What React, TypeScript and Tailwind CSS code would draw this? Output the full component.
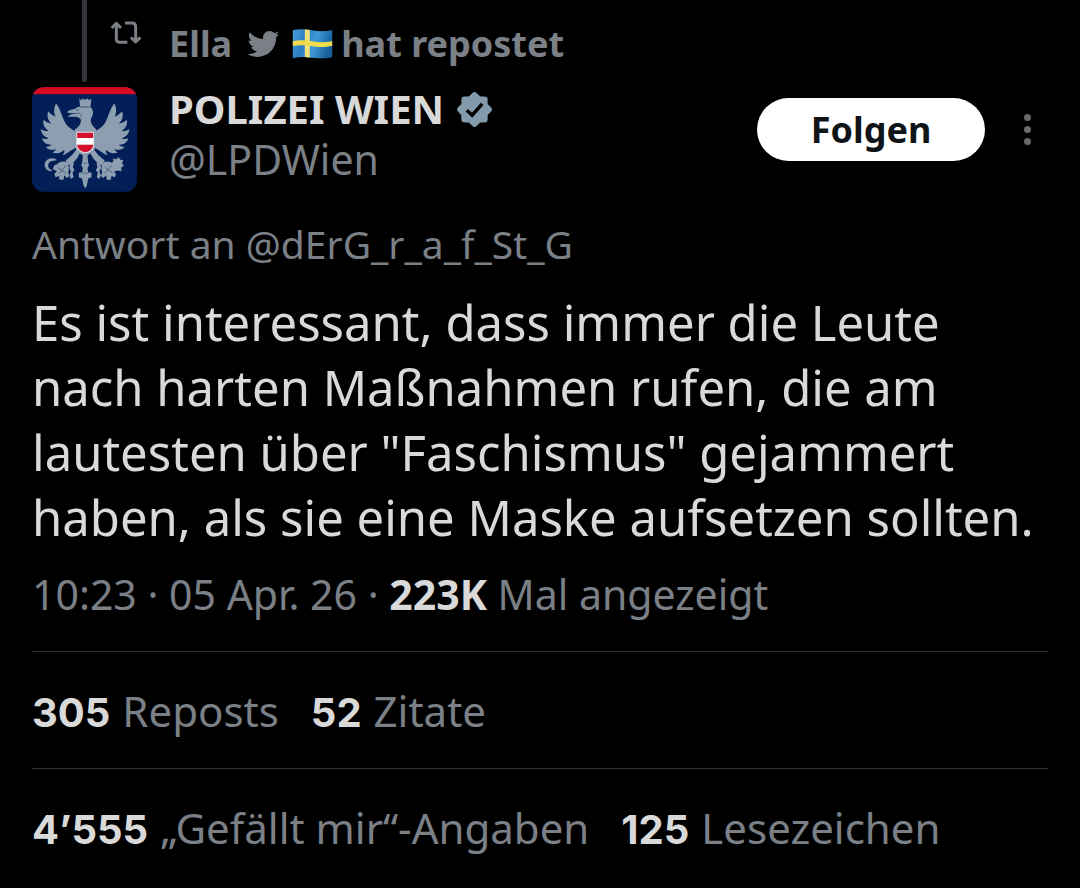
import { ReactNode } from "react";

const RepostIcon = () => (
    <svg viewBox="120 58 96 75" className="h-[25px] w-8" fill="none" stroke="currentColor" strokeWidth="9" aria-hidden="true">
        <path d="M139 69V114Q139 125 150 125H172" />
        <path d="M125 82L139 68L153 82" strokeLinejoin="round" />
        <path d="M165 67H186Q197 67 197 78V122" />
        <path d="M183 110L197 124L211 110" strokeLinejoin="round" />
    </svg>
);

const BirdIcon = () => (
    <svg viewBox="0 2 24 20" className="h-7 w-[34px]" fill="currentColor" role="img" aria-label="Twitter">
        <path d="M23.643 4.937c-.835.37-1.732.62-2.675.733.962-.576 1.7-1.49 2.048-2.578-.9.534-1.897.922-2.958 1.13-.85-.904-2.06-1.47-3.4-1.47-2.572 0-4.658 2.086-4.658 4.66 0 .364.042.718.12 1.06-3.873-.195-7.304-2.05-9.602-4.868-.4.69-.63 1.49-.63 2.342 0 1.616.823 3.043 2.072 3.878-.764-.025-1.482-.234-2.11-.583v.06c0 2.257 1.605 4.14 3.737 4.568-.392.106-.803.162-1.227.162-.3 0-.593-.028-.877-.082.593 1.85 2.313 3.198 4.352 3.234-1.595 1.25-3.604 1.995-5.786 1.995-.376 0-.747-.022-1.112-.065 2.062 1.323 4.51 2.093 7.14 2.093 8.57 0 13.255-7.098 13.255-13.254 0-.2-.005-.402-.014-.602.91-.658 1.7-1.477 2.323-2.41z" />
    </svg>
);

const SwedenFlag = () => (
    <svg viewBox="0 0 122 90" className="h-[30px] w-[41px]" role="img" aria-label="Schweden">
        <defs>
            <linearGradient id="flagBlue" x1="0" x2="1" y1="0" y2="0.25">
                <stop offset="0" stopColor="#4a9fdc" />
                <stop offset="0.35" stopColor="#2a80c0" />
                <stop offset="0.65" stopColor="#3f97d6" />
                <stop offset="1" stopColor="#17609c" />
            </linearGradient>
            <clipPath id="flagShape">
                <path d="M1 6Q1 4 4 3C22 -1 40 1 60 4C80 8 100 8 118 4Q121 3 121 6V82Q121 84 118 85C98 90 80 89 60 86C40 83 22 83 4 87Q1 88 1 85Z" />
            </clipPath>
        </defs>
        <g clipPath="url(#flagShape)">
            <rect width="122" height="90" fill="url(#flagBlue)" />
            <path d="M38 0H53V90H38Z" fill="#f3e07a" />
            <path d="M0 37C22 32 40 34 60 37C80 41 100 41 122 36V50C100 55 80 55 60 52C40 48 22 47 0 52Z" fill="#f3dc4c" />
        </g>
    </svg>
);

const VerifiedBadge = () => (
    <svg viewBox="60 35 110 110" className="size-[37px]" role="img" aria-label="Verifiziert">
        <rect x="76" y="51" width="78" height="78" rx="9" fill="#829aab" />
        <rect x="76" y="51" width="78" height="78" rx="9" fill="#829aab" transform="rotate(45 115 90)" />
        <path d="M92 92L108 107L138 73" fill="none" stroke="#000" strokeWidth="10" />
    </svg>
);

const Wing = () => (
    <path d="M172 168C152 160 140 150 133 136C125 120 120 98 108 82C100 92 100 110 106 122C98 118 90 112 84 106C78 118 84 134 94 143C85 141 74 137 70 131C66 145 74 158 86 165C78 166 68 164 62 159C62 172 72 184 86 187C80 190 70 190 65 187C68 200 80 207 94 206C88 211 82 213 76 212C84 222 98 224 108 219C104 225 100 228 96 229C108 236 124 230 132 221C134 228 130 234 126 238C142 234 156 218 174 212Z" />
);

const Leg = () => (
    <>
        <path d="M172 214C164 230 150 244 136 254L146 268C162 260 174 246 182 224Z" />
        <path d="M110 266C116 256 132 254 142 260C146 270 148 280 144 290L148 300L140 306L132 298L130 312L118 312L116 300L106 304L102 294L110 286L98 280L102 268Z" />
        <path d="M152 256L161 262L158 274L163 282L157 290L160 304L152 309L148 298L152 286L147 276Z" />
    </>
);

const Avatar = () => (
    <svg viewBox="35 33 316 315" className="size-[105px] shrink-0 rounded-xl" role="img" aria-label="POLIZEI WIEN">
        <rect x="35" y="33" width="316" height="315" fill="#021f58" />
        <rect x="35" y="33" width="316" height="21" fill="#d80b25" />
        <g fill="#8c9eb0">
            <Wing />
            <Leg />
            <g transform="translate(390 0) scale(-1 1)">
                <Wing />
                <Leg />
            </g>
            <path d="M177 68L184 72L187 67L195 71L203 67L207 72L214 68L211 92H180Z" />
            <path d="M180 92H210C222 102 220 118 212 128C210 142 220 152 228 160V210C222 228 208 234 202 238L204 260C208 266 206 272 202 276L204 290L214 290V304L204 308L200 330L195 337L190 330L186 308L176 304V290L186 290L188 276C184 272 182 266 186 260L188 238C174 232 166 222 164 208V160C176 152 184 142 182 130C176 124 172 122 166 122L142 122C150 114 158 114 168 113L140 109C146 100 158 101 166 97C170 94 174 92 180 92Z" />
            <path d="M108 250C92 242 74 250 73 266C73 280 86 290 98 284C88 282 82 274 84 266C87 256 96 254 108 254Z" />
            <path d="M270 262L280 258L278 248L288 250L296 244L302 252L310 252L306 262L312 270L304 274L304 286L292 284L280 288Z" />
        </g>
        <g fill="none" stroke="#304a73" strokeWidth="2">
            <path d="M180 93H211M168 103L176 100M146 112H178C184 114 186 120 180 124" />
            <path d="M190 262H200M186 292H204M112 274L136 292M138 268L116 294M254 274L276 290M276 268L254 292" />
        </g>
        <path d="M168 167H222V204C222 222 208 230 195 232C182 230 168 222 168 204Z" fill="#dce1e8" />
        <path d="M171 170H219V186H171Z" fill="#d40e2c" />
        <path d="M171 186H219V206H171Z" fill="#fff" />
        <path d="M171 206H219C218 220 206 227 195 229C184 227 172 220 171 206Z" fill="#d40e2c" />
    </svg>
);

const Stat = ({ count, children }: { count: string; children: ReactNode }) => (
    <a href="#" className="flex items-baseline gap-3">
        <strong className="font-['Inter'] text-[40px] text-[#d9d9d9]">{count}</strong>
        <span className="text-[42px]">{children}</span>
    </a>
);

const App = () => {
    return (
        <main className="min-h-screen bg-black px-8 font-['Noto_Sans',sans-serif] text-[41px] leading-[50px] text-[#7b8087]">
            <article>
                <div className="flex h-[87px]">
                    <div className="flex w-[105px] justify-center pb-[5px]">
                        <div className="w-[5px] rounded-b-full bg-[#323539]" />
                    </div>
                    <div className="-ml-[27px] w-[59px] pt-5">
                        <RepostIcon />
                    </div>
                    <div className="flex h-[88px] items-center text-[36px] font-bold">
                        <span className="mr-3.5">Ella</span>
                        <BirdIcon />
                        <span className="mr-2 ml-3"><SwedenFlag /></span>
                        <span>hat repostet</span>
                    </div>
                </div>

                <header className="flex">
                    <Avatar />
                    <div className="-mt-[3px] ml-8 h-[108px] flex-1">
                        <h1 className="flex items-center gap-3 text-[40px] font-bold text-[#d9d9d9]">
                            POLIZEI WIEN
                            <VerifiedBadge />
                        </h1>
                        <p>@LPDWien</p>
                    </div>
                    <button className="mt-[11px] h-[63px] w-[228px] rounded-full bg-white text-[36px] font-bold text-[#0f1419]">
                        Folgen
                    </button>
                    <button aria-label="Mehr" className="mt-[11px] mr-[17px] ml-[39px] flex h-[63px] flex-col items-center justify-center gap-[5px]">
                        <span className="size-[7px] rounded-full bg-[#6a6a6a]" />
                        <span className="size-[7px] rounded-full bg-[#6a6a6a]" />
                        <span className="size-[7px] rounded-full bg-[#6a6a6a]" />
                    </button>
                </header>

                <p className="mt-[27px] text-[39px]">
                    Antwort an <a href="#">@dErG_r_a_f_St_G</a>
                </p>

                <p className="mt-[21px] text-[49px] leading-[65px] text-[#d9d9d9]">
                    Es ist interessant, dass immer die Leute nach harten Maßnahmen rufen, die am lautesten über "Faschismus" gejammert haben, als sie eine Maske aufsetzen sollten.
                </p>

                <p className="mt-[19px] mb-8">
                    10:23 · 05 Apr. 26 · <strong className="text-[#d9d9d9]">223K</strong> Mal angezeigt
                </p>

                <div className="flex h-[117px] items-center gap-8 border-t border-[#2f3336] pt-1">
                    <Stat count="305">Reposts</Stat>
                    <Stat count="52">Zitate</Stat>
                </div>
                <div className="flex h-[117px] items-center gap-8 border-t border-[#2f3336] pt-1">
                    <Stat count="4’555">„Gefällt mir“-Angaben</Stat>
                    <Stat count="125">Lesezeichen</Stat>
                </div>
            </article>
        </main>
    );
};

export default App;
